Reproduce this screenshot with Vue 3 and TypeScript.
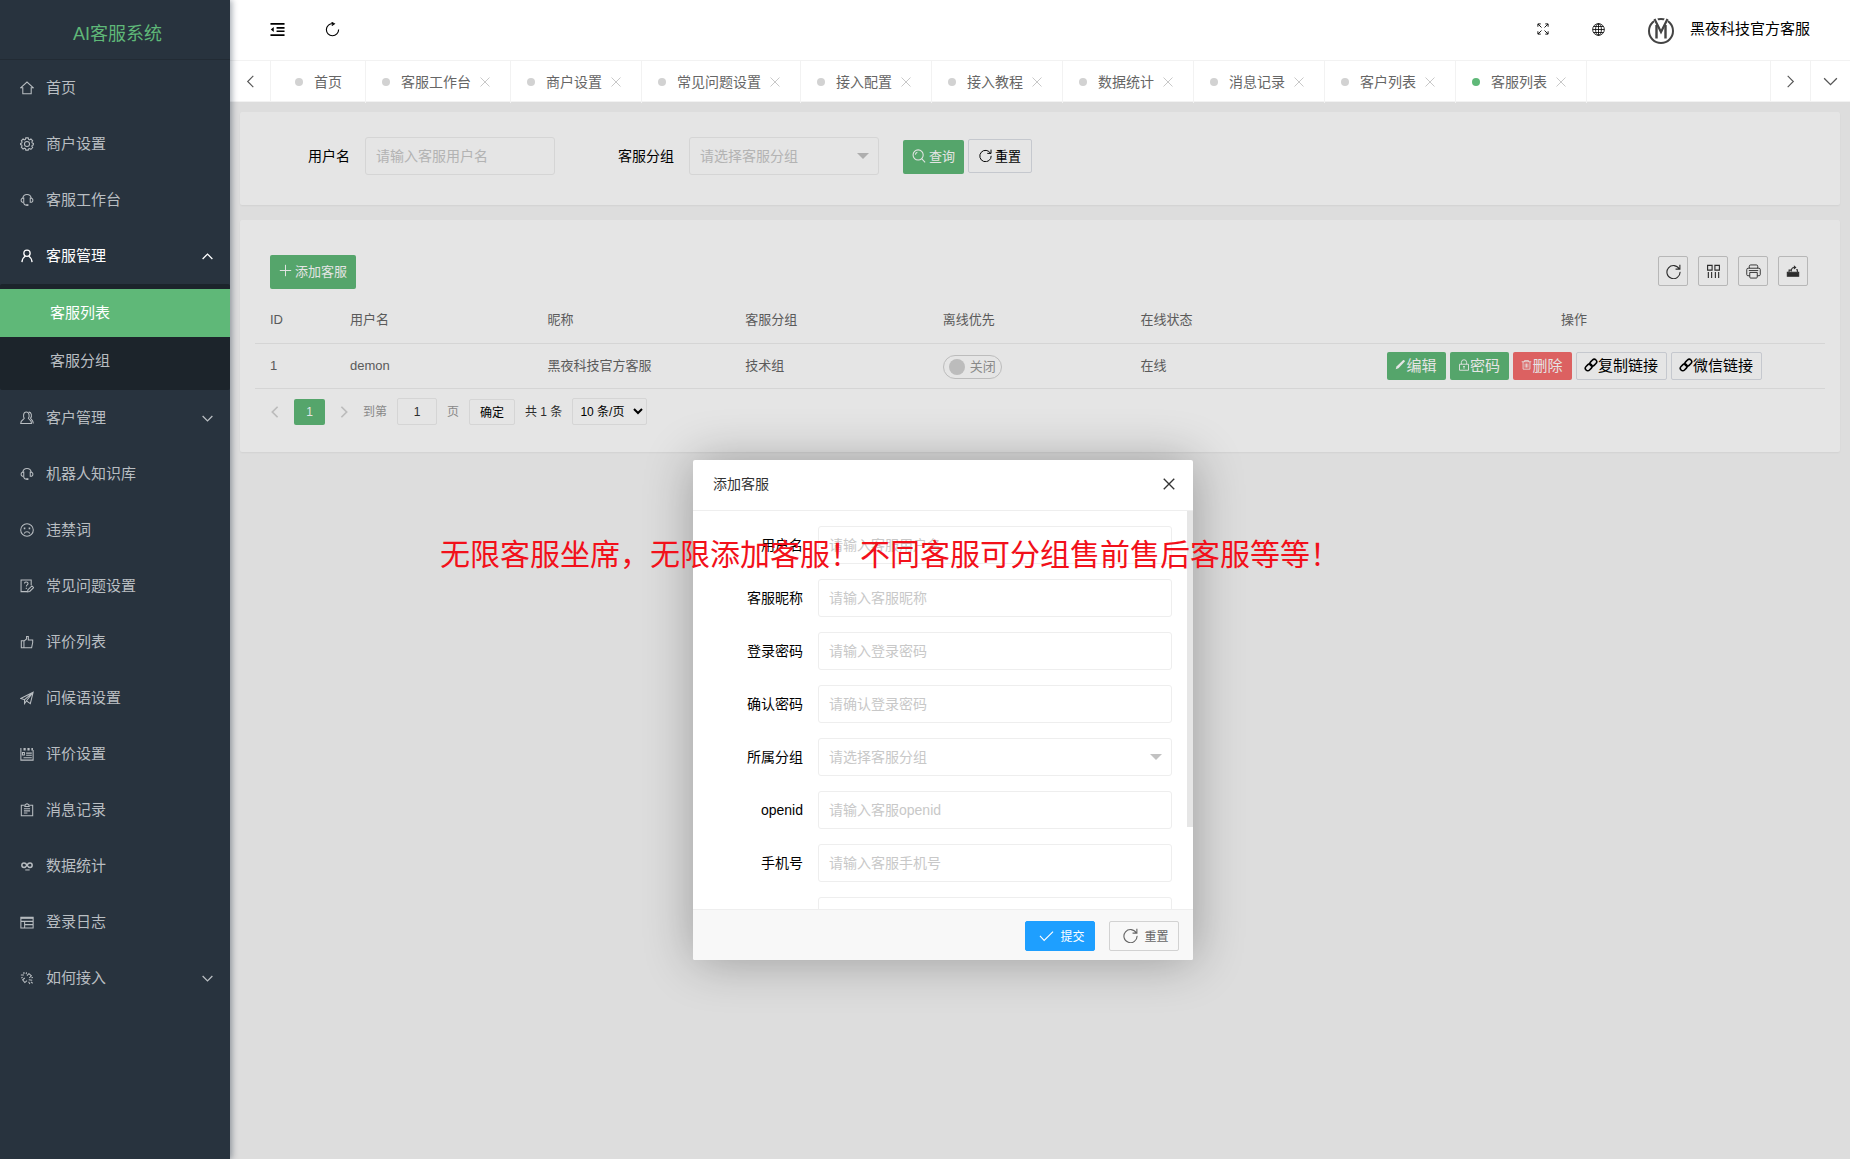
<script setup lang="ts">
import { h, ref } from 'vue'

const icons: Record<string, string> = {
  home: '<path d="M1 7.6 8 1.2l7 6.4h-2.2v6.9H3.2V7.6z"/>',
  gear: '<circle cx="8" cy="8" r="2.9"/><path d="M6.6 1h2.8l.4 1.7 1.2.5 1.5-.9 2 2-1 1.5.6 1.2 1.7.4v1.4l-1.7.5-.6 1.2 1 1.5-2 2-1.5-.9-1.2.5L9.400 15H6.600l-.4-1.700-1.200-.5-1.500.9-2-2 .9-1.500-.5-1.200L.3 8.700V7.400L1.900 7l.5-1.200-.9-1.500 2-2 1.500.9 1.200-.5z"/>',
  headset: '<path d="M3.200 6C3.600 3.400 5.400 1.700 8 1.700s4.400 1.700 4.800 4.300"/><path d="M4.300 5.800v4.800c-2 .3-3-.8-3-2.400s1-2.600 3-2.400zM11.700 5.800v4.800c2 .3 3-.8 3-2.400s-1-2.600-3-2.400z"/><path d="M4 11c.4 1.800 1.500 2.800 3 3"/><path d="M7 13.800h2.600" stroke-width="2"/>',
  user: '<g stroke-width="1.500"><circle cx="8" cy="4.800" r="3.600"/><path d="M6.200 8C4 9.300 2.500 11.800 2.200 15M9.800 8c2.200 1.300 3.700 3.800 4 7"/></g>',
  users: '<path d="M4.900 8.400C3.600 6.800 3.400 1.200 7.200 1.200s3.800 5.600 2.300 7.200c0 1 3.700 1.500 3.700 5.900H.8c0-4.400 4.100-4.900 4.100-5.900z"/><path d="M10 1.300c3.300-.3 3.800 4.800 2.100 6.900 0 1 3.100 1.800 3.100 6.100"/>',
  frown: '<circle cx="8" cy="8" r="7.200"/><path d="M4.800 11.900c1.200-2.500 5.200-2.500 6.400 0"/><path d="M4.300 6h1.800M9.900 6h1.800" stroke-width="2"/>',
  question: '<path d="M8 14.400H1.200V1.200h11.600v6"/><path d="M5.200 5c0-2.300 4-2.200 4 .1 0 1.600-2 1.500-2 3.400M7.200 10v1.400"/><path d="m8.600 14.700.5-2.500 4.500-4.300 1.900 1.900-4.400 4.400z"/>',
  like: '<path d="M1.500 6.500h3v8h-3zM4.500 7l3-2.500V1.600h2v4h5v3l-1.200 5.900H4.500"/>',
  plane: '<path d="m.8 8.500 14.200-7-3.200 13-4.400-3.300L15 1.500 5.200 10z"/><path d="M5.200 10v4.300l2.200-3"/>',
  form: '<path d="M1 1v14h14V3.500"/><path d="M4 2.500h2.500M8.500 2.500H11M13 2.500h1.800" stroke-width="3"/><path d="M7 7h6.500M7 9.500h6.500M4 12.300h9.500M5 6.200H2.800v3H5z"/>',
  clipboard: '<path d="M4.500 2.500h-3v12h13v-12h-3M5.500 4V2.300c1.500 0 1-1.500 2.500-1.500s1 1.500 2.500 1.500V4zM4.500 6.600h7M4.500 9h7M4.500 11.500h4"/>',
  infinity: '<path d="M8 7c-1-1.600-2-2.300-3.400-2.300a2.500 2.500 0 0 0 0 5C6 9.700 7 8.700 8 7s2-2.300 3.400-2.300a2.500 2.500 0 0 1 0 5C10 9.700 9 8.700 8 7z" stroke-width="1.700"/><path d="M6 12.500h5"/>',
  window: '<path d="M1 2.500h14v12.300H1zM1 7.300h14M5.300 7.300v7.500M5.300 11H15"/><path d="M1 3.400h14" stroke-width="2"/>',
  link: '<path d="M4.500 1v2.500M1 4.500h3.500M8 5.200 10.200 3l2.800 2.500-2.500 2.500M5.500 8 3 10.200l2.500 3L8 11M1.500 8.200 3 7M10 10l4 .5M9.800 12.300l1.500 2.500M12.500 12.500l2 1.500M7.500 1.500 7 3.500M14.800 7.500l-1.800.3"/>',
  up: '<path d="m2 11 6-6 6 6"/>',
  down: '<path d="m2 5 6 6 6-6"/>',
  left: '<path d="M11 2 5 8l6 6"/>',
  right: '<path d="m5 2 6 6-6 6"/>',
  close: '<path d="m2 2 12 12M14 2 2 14"/>',
  indent: '<path d="M.5 2h15M.5 14h15M7 6.300h8.500M7 9.800h8.500" stroke-width="1.700"/><path d="M.800 8 4 5.400v5.200z" fill="currentColor" stroke="none"/>',
  reload: '<path d="M8.600 1.700a6.500 6.500 0 1 0 5.900 6.300M7 .3l3 1.600-2.700 2"/>',
  refresh: '<path d="M14.200 5.400A7 7 0 1 0 15 8.400M14.800.8v4.600h-4.600"/>',
  expand: '<path d="M6 6 1.500 1.500M1.200 5V1.200H5M10 6l4.500-4.500M11 1.200h3.800V5M6 10l-4.500 4.500M1.200 11v3.800H5M10 10l4.500 4.500M11 14.800h3.800V11"/>',
  globe: '<g stroke-width="1"><circle cx="8" cy="8" r="7.200"/><ellipse cx="8" cy="8" rx="3.600" ry="7.200"/><path d="M8 .8v14.400M.8 8h14.400M2 4.300h12M2 11.700h12"/></g>',
  search: '<circle cx="7" cy="6.800" r="5.800"/><path d="m11 11 4 4.200"/><path d="M3.800 6.500c.2-1.600 1-2.500 2.300-2.900"/>',
  plus: '<path d="M8 1v14M1 8h14"/>',
  columns: '<path d="M1.700 1.500h4.800v5H1.700zM9.500 1.500h4.800v5H9.500zM2.500 8.500v6.500M6 8.500v6.500M10 8.500v6.500M13.500 8.500v6.500"/>',
  print: '<g stroke-width="1"><path d="M3.500 4.500V2.500c0-1 .5-1.500 1.500-1.500h6c1 0 1.500.5 1.500 1.500v2M4 12.500H2c-.8 0-1.200-.5-1.200-1.200V6c0-1 .5-1.500 1.500-1.500h11.400c1 0 1.500.5 1.500 1.500v5.300c0 .7-.4 1.200-1.200 1.200h-2M3 7h10M4 9h8v5c0 .7-.4 1-1 1H5c-.6 0-1-.3-1-1z"/></g>',
  export: '<path d="M1.500 9.500h13V14h-13z" fill="currentColor"/><path d="M3.500 9V7h2.500M13 9V6.500h-1.500M6 8.500C6 5.500 7 4 9.500 4"/><path d="M9 1.500 12 4 9 6.200z" fill="currentColor" stroke="none"/>',
  pencil: '<path d="m1 15 1.200-4L12 1.500c1-.7 2.800 1 2.200 2L5 13.500z" fill="currentColor" stroke="none"/>',
  lock: '<path d="M2 7h12v8H2zM4.500 7V4.500a3.500 3.500 0 0 1 7 0V7M8 9.500v3.500M6.800 10h2.400"/>',
  trash: '<path d="M1 4h14M5 4V2.300h6V4M3 4v10.800h10V4M6 6.500v6M8 6.500v6M10 6.500v6"/>',
  chain: '<g transform="rotate(-45 8 8)" stroke-width="1.800"><rect x="0" y="5.200" width="8.600" height="5.600" rx="2.800"/><rect x="7.400" y="5.200" width="8.600" height="5.600" rx="2.800"/></g>',
  check: '<path d="m1 8.500 4.500 4.700L15 3.800"/>',
}

const Icon = (props: { name: string; size?: number }) =>
  h('svg', {
    class: 'icon',
    viewBox: '0 0 16 16',
    width: props.size ?? 14,
    height: props.size ?? 14,
    'aria-hidden': 'true',
    innerHTML: icons[props.name],
  })
Icon.props = ['name', 'size']

interface MenuItem {
  label: string
  icon: string
  arrow?: 'up' | 'down'
  children?: string[]
}

const menu: MenuItem[] = [
  { label: '首页', icon: 'home' },
  { label: '商户设置', icon: 'gear' },
  { label: '客服工作台', icon: 'headset' },
  { label: '客服管理', icon: 'user', arrow: 'up', children: ['客服列表', '客服分组'] },
  { label: '客户管理', icon: 'users', arrow: 'down' },
  { label: '机器人知识库', icon: 'headset' },
  { label: '违禁词', icon: 'frown' },
  { label: '常见问题设置', icon: 'question' },
  { label: '评价列表', icon: 'like' },
  { label: '问候语设置', icon: 'plane' },
  { label: '评价设置', icon: 'form' },
  { label: '消息记录', icon: 'clipboard' },
  { label: '数据统计', icon: 'infinity' },
  { label: '登录日志', icon: 'window' },
  { label: '如何接入', icon: 'link', arrow: 'down' },
]

const tabs = ['首页', '客服工作台', '商户设置', '常见问题设置', '接入配置', '接入教程', '数据统计', '消息记录', '客户列表', '客服列表']
const activeTab = ref('客服列表')
const activeChild = ref('客服列表')

const tools = [
  { icon: 'refresh', title: '刷新', size: 15 },
  { icon: 'columns', title: '筛选列', size: 15 },
  { icon: 'print', title: '打印', size: 15 },
  { icon: 'export', title: '导出', size: 14 },
]

const columns = ['ID', '用户名', '昵称', '客服分组', '离线优先', '在线状态']

const rows = [{ id: 1, username: 'demon', nickname: '黑夜科技官方客服', group: '技术组', status: '在线' }]

const fields = [
  { id: 'username', label: '用户名', hint: '请输入客服用户名', type: 'text' },
  { id: 'nickname', label: '客服昵称', hint: '请输入客服昵称', type: 'text' },
  { id: 'password', label: '登录密码', hint: '请输入登录密码', type: 'password' },
  { id: 'confirm', label: '确认密码', hint: '请确认登录密码', type: 'password' },
  { id: 'group', label: '所属分组', hint: '请选择客服分组', type: 'select' },
  { id: 'openid', label: 'openid', hint: '请输入客服openid', type: 'text' },
  { id: 'phone', label: '手机号', hint: '请输入客服手机号', type: 'text' },
  { id: 'extra', label: '', hint: '', type: 'text' },
]
</script>

<template>
  <div class="layout">
    <aside class="side">
      <h1 class="logo">AI客服系统</h1>
      <nav>
        <ul class="menu">
          <li v-for="item in menu" :key="item.label">
            <a href="#" class="menu-link" :class="{ open: item.children }">
              <Icon :name="item.icon" />
              <span>{{ item.label }}</span>
              <Icon v-if="item.arrow" class="menu-arrow" :name="item.arrow" :size="13" />
            </a>
            <ul v-if="item.children" class="submenu">
              <li v-for="child in item.children" :key="child">
                <a href="#" class="submenu-link" :class="{ active: child === activeChild }" @click.prevent="activeChild = child">{{ child }}</a>
              </li>
            </ul>
          </li>
        </ul>
      </nav>
    </aside>

    <div class="main">
      <header class="header">
        <button class="bare" type="button" aria-label="收起菜单"><Icon name="indent" :size="15" /></button>
        <button class="bare reload" type="button" aria-label="刷新"><Icon name="reload" :size="15" /></button>
        <div class="header-right">
          <button class="bare" type="button" aria-label="全屏"><Icon name="expand" :size="12" /></button>
          <button class="bare globe" type="button" aria-label="语言"><Icon name="globe" :size="13" /></button>
          <a href="#" class="account">
            <svg class="avatar" viewBox="0 0 28 28" width="28" height="28" aria-hidden="true">
              <circle cx="14" cy="15" r="12" fill="none" stroke="#444" stroke-width="2" />
              <path d="M7.500 1.500 14 14 20.500 1.500" fill="none" stroke="#fff" stroke-width="4" />
              <path d="M9.500 22.500V9M18.500 22.500V9" fill="none" stroke="#444" stroke-width="2.400" />
              <path d="M7.500 3 14 16 20.500 3" fill="none" stroke="#444" stroke-width="2.200" />
            </svg>
            <span>黑夜科技官方客服</span>
          </a>
        </div>
      </header>

      <div class="tabbar">
        <button class="bare tab-control prev" type="button" aria-label="向左"><Icon name="left" :size="15" /></button>
        <ul class="tabs">
          <li v-for="(tab, i) in tabs" :key="tab" class="tab" :class="{ fixed: i === 0, active: tab === activeTab }" @click="activeTab = tab">
            <span class="dot"></span>
            <span>{{ tab }}</span>
            <button v-if="i > 0" class="bare tab-close" type="button" aria-label="关闭标签"><Icon name="close" :size="12" /></button>
          </li>
        </ul>
        <button class="bare tab-control next" type="button" aria-label="向右"><Icon name="right" :size="15" /></button>
        <button class="bare tab-control more" type="button" aria-label="更多"><Icon name="down" :size="17" /></button>
      </div>

      <main class="page">
        <section class="card">
          <form class="search" @submit.prevent>
            <label class="form-label" for="q-name">用户名</label>
            <input id="q-name" class="field" type="text" placeholder="请输入客服用户名" />
            <label class="form-label second" for="q-group">客服分组</label>
            <div class="select-wrap">
              <select id="q-group" class="field"><option>请选择客服分组</option></select>
            </div>
            <button class="btn primary query" type="submit"><Icon name="search" />查询</button>
            <button class="btn plain reset" type="reset"><Icon name="refresh" :size="13" />重置</button>
          </form>
        </section>

        <section class="card list">
          <div class="toolbar">
            <button class="btn primary" type="button"><Icon name="plus" :size="13" />添加客服</button>
            <div class="tools">
              <button v-for="tool in tools" :key="tool.icon" class="tool" type="button" :aria-label="tool.title"><Icon :name="tool.icon" :size="tool.size" /></button>
            </div>
          </div>

          <table class="table">
            <colgroup>
              <col class="col-id" />
              <col v-for="n in 5" :key="n" />
              <col class="col-actions" />
            </colgroup>
            <thead>
              <tr>
                <th v-for="column in columns" :key="column">{{ column }}</th>
                <th class="center">操作</th>
              </tr>
            </thead>
            <tbody>
              <tr v-for="row in rows" :key="row.id">
                <td>{{ row.id }}</td>
                <td>{{ row.username }}</td>
                <td>{{ row.nickname }}</td>
                <td>{{ row.group }}</td>
                <td>
                  <label class="switch"><input type="checkbox" role="switch" aria-label="离线优先" /><span>关闭</span></label>
                </td>
                <td>{{ row.status }}</td>
                <td>
                  <div class="actions">
                    <button class="act primary" type="button"><Icon name="pencil" :size="11" />编辑</button>
                    <button class="act primary" type="button"><Icon name="lock" :size="12" />密码</button>
                    <button class="act danger" type="button"><Icon name="trash" :size="11" />删除</button>
                    <button class="act plain" type="button"><Icon name="chain" :size="14" />复制链接</button>
                    <button class="act plain" type="button"><Icon name="chain" :size="14" />微信链接</button>
                  </div>
                </td>
              </tr>
            </tbody>
          </table>

          <div class="pager">
            <button class="bare pager-arrow" type="button" aria-label="上一页"><Icon name="left" /></button>
            <button class="current" type="button">1</button>
            <button class="bare pager-arrow" type="button" aria-label="下一页"><Icon name="right" /></button>
            <label class="muted" for="page-no">到第</label>
            <input id="page-no" class="page-no" type="text" value="1" />
            <span class="muted">页</span>
            <button class="confirm" type="button">确定</button>
            <span class="total">共 1 条</span>
            <select class="page-size" aria-label="每页条数"><option>10 条/页</option></select>
          </div>
        </section>

        <div class="shade"></div>

        <div class="dialog" role="dialog" aria-labelledby="dialog-title">
          <div class="dialog-head">
            <h2 id="dialog-title">添加客服</h2>
            <button class="bare" type="button" aria-label="关闭"><Icon name="close" /></button>
          </div>
          <form id="add-form" class="dialog-body" @submit.prevent>
            <div v-for="field in fields" :key="field.id" class="form-row">
              <label class="form-label" :for="field.id">{{ field.label }}</label>
              <div v-if="field.type === 'select'" class="select-wrap grow">
                <select :id="field.id" class="field"><option>{{ field.hint }}</option></select>
              </div>
              <input v-else :id="field.id" class="field grow" :type="field.type" :placeholder="field.hint" />
            </div>
            <span class="scrollbar"></span>
          </form>
          <div class="dialog-foot">
            <button class="foot-btn submit" type="submit" form="add-form"><Icon name="check" :size="15" />提交</button>
            <button class="foot-btn" type="reset" form="add-form"><Icon name="refresh" :size="15" />重置</button>
          </div>
        </div>

        <p class="notice">无限客服坐席，无限添加客服！不同客服可分组售前售后客服等等！</p>
      </main>
    </div>
  </div>
</template>

<style>
body {
  margin: 0;
}
</style>

<style scoped>
.layout,
.layout * {
  box-sizing: border-box;
}
.layout {
  display: flex;
  min-height: 100vh;
  overflow: hidden;
  color: #000;
  font-family: "Liberation Sans", "Noto Sans CJK SC", sans-serif;
  font-size: 14px;
  line-height: 20px;
}
button,
input,
select {
  margin: 0;
  font-family: inherit;
}
button {
  white-space: nowrap;
}
ul {
  margin: 0;
  padding: 0;
  list-style: none;
}
a {
  color: inherit;
  text-decoration: none;
}
.icon {
  flex: none;
  fill: none;
  stroke: currentColor;
  stroke-width: 1.2;
}
.bare {
  display: flex;
  padding: 0;
  border: 0;
  background: none;
  color: inherit;
}

/* sidebar */
.side {
  position: relative;
  z-index: 3;
  flex: none;
  width: 230px;
  background: #28333e;
  box-shadow: 2px 0 6px rgba(0, 21, 41, 0.35);
  color: #b9bec2;
}
.logo {
  height: 60px;
  margin: 0;
  padding-left: 5px;
  border-bottom: 1px solid #222b34;
  color: #5fb878;
  font-size: 18px;
  font-weight: 400;
  line-height: 68px;
  text-align: center;
}
.menu-link {
  display: flex;
  align-items: center;
  gap: 12px;
  height: 56px;
  padding: 0 16px 0 20px;
  font-size: 15px;
}
.menu-link.open {
  color: #fff;
}
.menu-arrow {
  margin-left: auto;
  stroke-width: 1.6;
}
.submenu {
  padding: 5px 0;
  border-radius: 2px;
  background: #1c242b;
}
.submenu-link {
  display: block;
  padding-left: 50px;
  font-size: 15px;
  line-height: 48px;
}
.submenu-link.active {
  background: #5fb878;
  color: #fff;
}

/* header */
.main {
  display: flex;
  flex: 1;
  flex-direction: column;
  min-width: 0;
}
.header {
  display: flex;
  align-items: center;
  height: 61px;
  padding: 0 40px 2px;
  border-bottom: 1px solid #f2f2f2;
  background: #fff;
}
.reload {
  margin-left: 40px;
}
.header-right {
  display: flex;
  align-items: center;
  margin-left: auto;
}
.globe {
  margin-left: 43px;
}
.account {
  display: flex;
  align-items: center;
  gap: 15px;
  margin-left: 42px;
  font-size: 15px;
}
.avatar {
  margin-top: 2px;
}

/* tabs */
.tabbar {
  position: relative;
  z-index: 2;
  display: flex;
  height: 41px;
  border-bottom: 1px solid #f2f2f2;
  background: #fff;
  color: #555;
}
.tab-control {
  flex: none;
  align-items: center;
  justify-content: center;
  width: 41px;
  height: 40px;
}
.prev {
  border-right: 1px solid #f2f2f2;
}
.next,
.more {
  width: 40px;
  border-left: 1px solid #f2f2f2;
}
.tabs {
  display: flex;
  flex: 1;
}
.tab {
  display: flex;
  align-items: center;
  height: 42px;
  padding: 0 19px 0 16px;
  border-right: 1px solid #f2f2f2;
  color: #666;
  white-space: nowrap;
}
.tab.fixed {
  padding: 0 23px 0 24px;
}
.dot {
  width: 8px;
  height: 8px;
  margin-right: 11px;
  border-radius: 50%;
  background: #d2d2d2;
}
.tab.active .dot {
  background: #5fb878;
}
.tab-close {
  margin-left: 8px;
  color: #c2c2c2;
}

/* page */
.page {
  position: relative;
  flex: 1;
  padding: 10px;
  background: #f6f6f6;
}
.card {
  margin-bottom: 15px;
  border-radius: 2px;
  background: #fff;
  box-shadow: 0 1px 2px rgba(0, 0, 0, 0.05);
}
.search {
  display: flex;
  align-items: flex-start;
  padding: 25px 0 30px;
}
.form-label {
  flex: none;
  width: 110px;
  margin-right: 15px;
  line-height: 38px;
  text-align: right;
}
.form-label.second {
  margin-left: 9px;
}
.field {
  width: 190px;
  height: 38px;
  padding: 0 10px;
  border: 1px solid #eee;
  border-radius: 3px;
  background: #fff;
  color: #000;
  font-size: 14px;
}
.field::placeholder {
  color: #c8c8c8;
}
select.field {
  appearance: none;
  color: #c8c8c8;
}
.select-wrap {
  position: relative;
}
.select-wrap::after {
  position: absolute;
  top: 16px;
  right: 10px;
  border: 6px solid transparent;
  border-top-color: #c2c2c2;
  border-bottom: 0;
  content: "";
  pointer-events: none;
}
.grow {
  flex: 1;
}
.select-wrap.grow .field {
  width: 100%;
}
.btn {
  display: flex;
  align-items: center;
  gap: 3px;
  height: 34px;
  padding: 0 9px 3px;
  border: 0;
  border-radius: 2px;
  font-size: 13px;
}
.primary {
  background: #5fb878;
  color: #fff;
}
.danger {
  background: #f56c6c;
  color: #fff;
}
.plain {
  border: 1px solid #dcdfe6;
  background: #fff;
  color: #000;
}
.query {
  margin: 3px 0 0 24px;
}
.reset {
  margin: 2px 0 0 4px;
  padding: 0 10px 1px;
}

/* list */
.list {
  padding: 35px 15px 27px;
}
.toolbar {
  display: flex;
  justify-content: space-between;
  align-items: flex-start;
  padding: 0 17px 9px 15px;
}
.tools {
  display: flex;
  gap: 10px;
  padding-top: 1px;
}
.tool {
  display: flex;
  align-items: center;
  justify-content: center;
  width: 30px;
  height: 30px;
  padding: 0;
  border: 1px solid #ccc;
  border-radius: 2px;
  background: #fff;
  color: #333;
}
.table {
  width: 100%;
  border-collapse: collapse;
  table-layout: fixed;
  color: #666;
  font-size: 13px;
}
.col-id {
  width: 80px;
}
.col-actions {
  width: 502px;
}
th,
td {
  height: 45px;
  padding: 0 15px;
  border-bottom: 1px solid #eee;
  font-weight: 400;
  text-align: left;
}
th.center {
  text-align: center;
}
.switch {
  display: flex;
  align-items: center;
  gap: 5px;
  width: 59px;
  height: 24px;
  margin-top: 3px;
  padding: 0 5px;
  border: 1px solid #d2d2d2;
  border-radius: 20px;
  color: #999;
}
.switch input {
  width: 16px;
  height: 16px;
  margin: 0;
  border-radius: 50%;
  appearance: none;
  background: #d2d2d2;
}
.actions {
  display: flex;
  justify-content: center;
  align-items: center;
  gap: 4px;
}
.act {
  display: flex;
  align-items: center;
  justify-content: center;
  width: 59px;
  height: 28px;
  padding: 0 0 2px;
  border: 0;
  border-radius: 2px;
  font-size: 15px;
}
.act.plain {
  width: 91px;
  border: 1px solid #dcdfe6;
}
.pager {
  display: flex;
  align-items: center;
  height: 26px;
  margin: 10px 0 0 13px;
  font-size: 12px;
}
.pager-arrow {
  color: #d2d2d2;
}
.pager-arrow .icon {
  stroke-width: 2;
}
.current {
  width: 31px;
  height: 26px;
  margin: 0 12px;
  border: 0;
  border-radius: 2px;
  background: #5fb878;
  color: #fff;
  font-size: 12px;
}
.muted {
  color: #999;
}
label.muted {
  margin-left: 12px;
}
.page-no {
  width: 40px;
  height: 27px;
  margin: 0 10px;
  padding: 0;
  border: 1px solid #eee;
  border-radius: 2px;
  color: #333;
  font-size: 12px;
  text-align: center;
}
.confirm {
  width: 46px;
  height: 26px;
  margin: 0 10px;
  padding: 0;
  border: 1px solid #eee;
  border-radius: 2px;
  background: #fff;
  color: #000;
  font-size: 12px;
}
.total {
  margin-right: 10px;
  color: #333;
}
.page-size {
  width: 75px;
  height: 27px;
  padding: 0 3px;
  border: 1px solid #eee;
  border-radius: 2px;
  background: #fff;
  color: #000;
  font-size: 12px;
}

/* dialog */
.shade {
  position: absolute;
  inset: 0;
  background: rgba(0, 0, 0, 0.1);
}
.dialog {
  position: absolute;
  top: 358px;
  left: 463px;
  width: 500px;
  border-radius: 2px;
  background: #fff;
  box-shadow: 1px 1px 50px rgba(0, 0, 0, 0.3);
}
.dialog-head {
  display: flex;
  align-items: center;
  justify-content: space-between;
  height: 51px;
  padding: 0 17px 2px 20px;
  border-bottom: 1px solid #eee;
  color: #333;
}
.dialog-head h2 {
  margin: 0;
  font-size: 14px;
  font-weight: 400;
}
.dialog-head .icon {
  stroke-width: 1.6;
}
.dialog-body {
  position: relative;
  height: 398px;
  padding: 15px 21px 0 0;
  overflow: hidden;
}
.form-row {
  display: flex;
  margin-bottom: 15px;
}
.scrollbar {
  position: absolute;
  top: 0;
  right: 0;
  width: 6px;
  height: 316px;
  background: #e6e6e6;
}
.dialog-foot {
  display: flex;
  justify-content: flex-end;
  gap: 14px;
  height: 51px;
  padding: 11px 14px;
  border-top: 1px solid #eee;
  border-radius: 0 0 2px 2px;
  background: #f8f8f8;
}
.foot-btn {
  display: flex;
  align-items: center;
  justify-content: center;
  gap: 6px;
  width: 70px;
  height: 30px;
  padding: 0 0 1px 4px;
  border: 1px solid #d2d2d2;
  border-radius: 2px;
  background: #f8f8f8;
  color: #666;
  font-size: 12px;
}
.foot-btn.submit {
  border-color: #1e9fff;
  background: #1e9fff;
  color: #fff;
}
.notice {
  position: absolute;
  top: 431px;
  left: 210px;
  margin: 0;
  color: #f2101a;
  font-size: 30px;
  line-height: 44px;
  white-space: nowrap;
  pointer-events: none;
}
</style>
